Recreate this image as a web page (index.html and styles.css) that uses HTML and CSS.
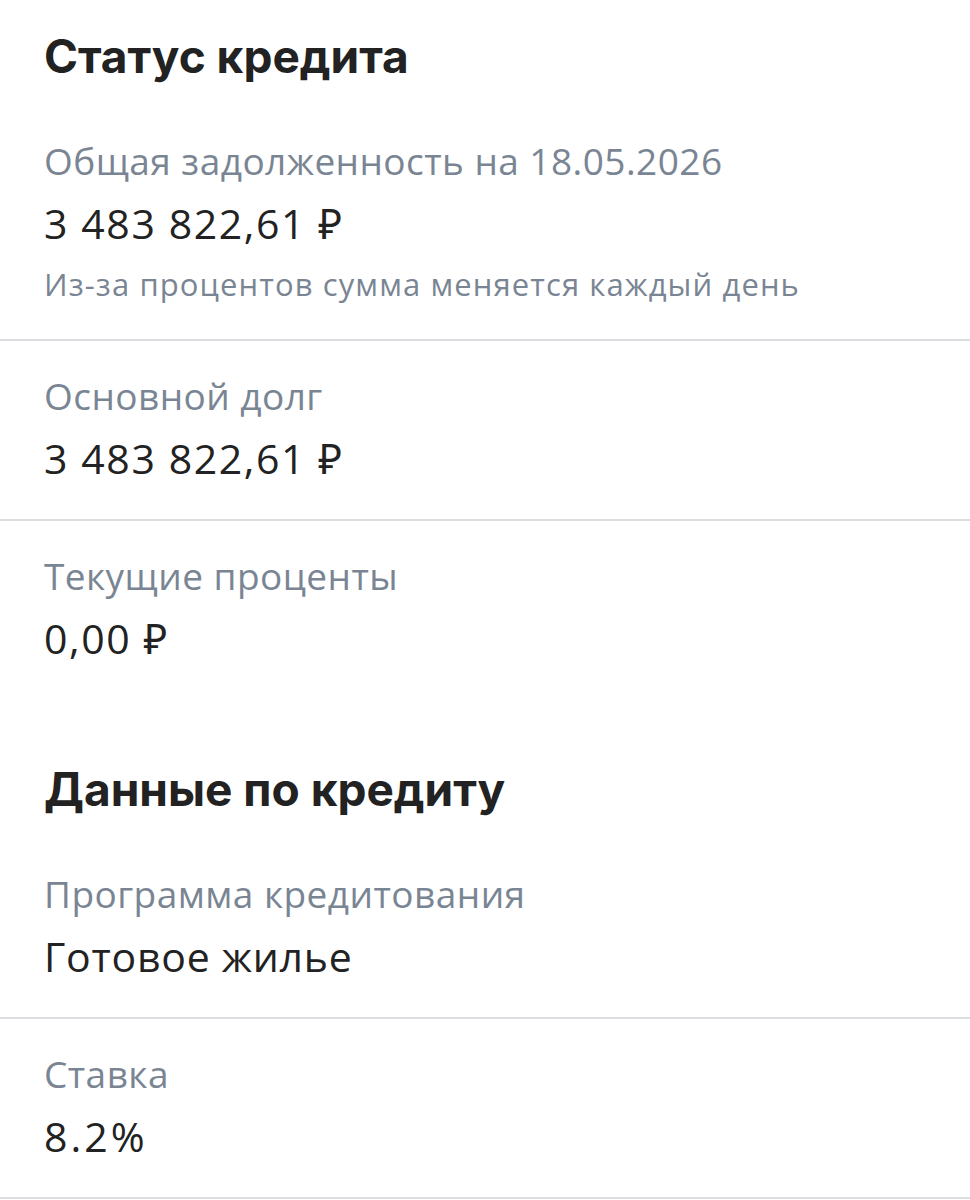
FILE: index.html
```html
<!DOCTYPE html>
<html lang="ru">
<head>
<meta charset="utf-8">
<title>Статус кредита</title>
<link rel="stylesheet" href="styles.css">
</head>
<body>
<main class="page">
  <section class="block">
    <h2 class="block-title">Статус кредита</h2>
    <div class="row">
      <div class="row-label">Общая задолженность на 18.05.2026</div>
      <div class="row-value">3 483 822,61 ₽</div>
      <div class="row-note">Из-за процентов сумма меняется каждый день</div>
    </div>
    <div class="row">
      <div class="row-label">Основной долг</div>
      <div class="row-value">3 483 822,61 ₽</div>
    </div>
    <div class="row row-last">
      <div class="row-label">Текущие проценты</div>
      <div class="row-value">0,00 ₽</div>
    </div>
  </section>
  <section class="block block-second">
    <h2 class="block-title">Данные по кредиту</h2>
    <div class="row">
      <div class="row-label">Программа кредитования</div>
      <div class="row-value row-value-text">Готовое жилье</div>
    </div>
    <div class="row">
      <div class="row-label">Ставка</div>
      <div class="row-value row-value-rate">8.2%</div>
    </div>
  </section>
</main>
</body>
</html>
```

FILE: styles.css
```css
html, body {
  margin: 0;
  padding: 0;
  background: #ffffff;
}

body {
  font-family: "Open Sans", "Noto Sans", "DejaVu Sans", sans-serif;
  color: #222222;
}

.page {
  display: flex;
  flex-direction: column;
  padding-top: 26px;
}

.block {
  display: flex;
  flex-direction: column;
}

.block-second {
  margin-top: 60px;
}

.block-title {
  margin: 0 0 20px;
  padding: 0 44px;
  font-family: "Inter", "Open Sans", sans-serif;
  font-weight: 700;
  font-size: 46px;
  line-height: 60px;
  color: #222222;
  letter-spacing: 0;
}

.row {
  display: flex;
  flex-direction: column;
  padding: 30px 44px 33px;
  border-bottom: 2px solid #dcdde0;
}

.row-last {
  border-bottom: none;
}

.row-label {
  font-size: 37px;
  line-height: 50px;
  color: #7a8594;
  letter-spacing: 0.45px;
}

.row-value {
  margin-top: 9px;
  font-size: 41px;
  line-height: 56px;
  color: #222222;
  letter-spacing: 1.6px;
}

.row-value-text {
  letter-spacing: 0.75px;
}

.row-value-rate {
  letter-spacing: 3px;
}

.row-note {
  margin-top: 13px;
  margin-bottom: 2px;
  font-size: 31px;
  line-height: 40px;
  color: #7a8594;
  letter-spacing: 1.1px;
}
```
